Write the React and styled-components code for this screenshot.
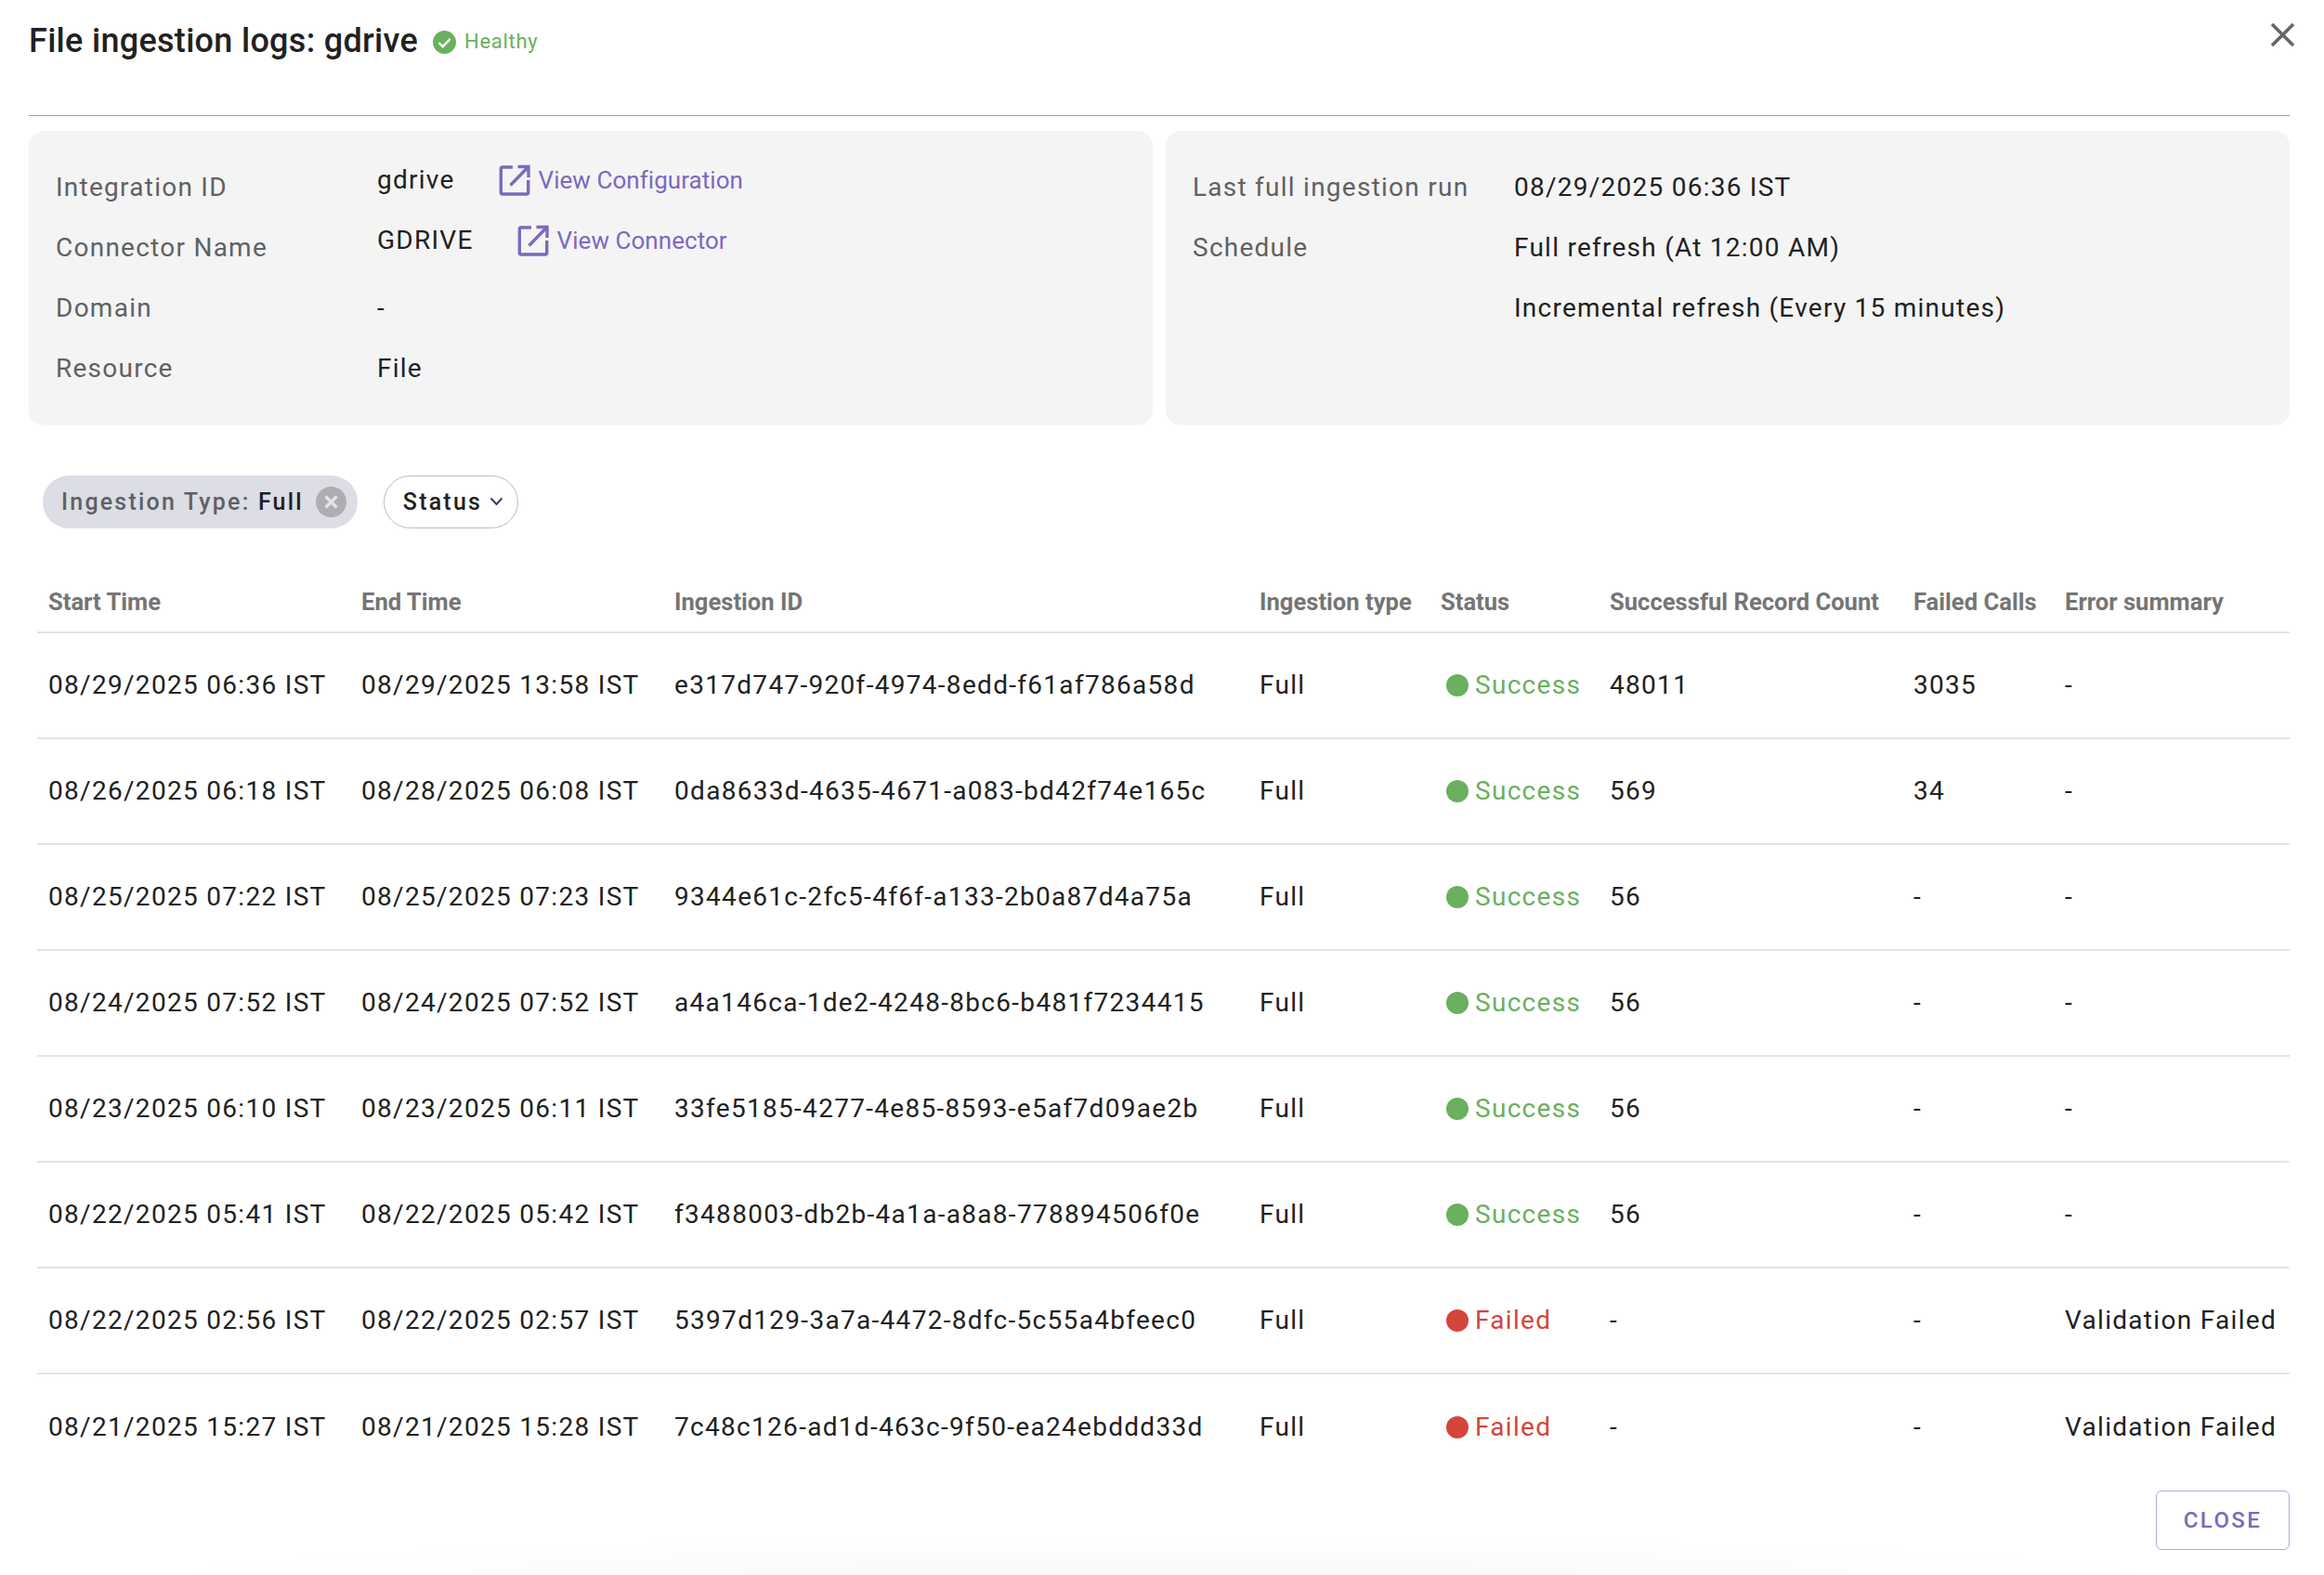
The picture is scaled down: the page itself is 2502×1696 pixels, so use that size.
import styled, { createGlobalStyle } from "styled-components";

const GlobalStyle = createGlobalStyle`
  html, body {
    margin: 0;
    padding: 0;
    background: #fff;
  }
  body {
    font-family: Roboto, "Liberation Sans", sans-serif;
    color: #212121;
  }
`;

const Dialog = styled.div`
  position: relative;
  width: 2502px;
  height: 1696px;
  box-sizing: border-box;
  padding: 0 37px 0 31px;
  overflow: hidden;

  &::after {
    content: "";
    position: absolute;
    left: 200px;
    right: 200px;
    bottom: 0;
    height: 40px;
    background: radial-gradient(ellipse 50% 100% at 50% 100%, #fafafa 30%, rgba(250, 250, 250, 0));
    pointer-events: none;
  }
`;

const Header = styled.header`
  position: relative;
  height: 124px;
  border-bottom: 1.5px solid #a0a0a0;
  display: flex;
  align-items: flex-start;
`;

const Title = styled.h2`
  margin: 21px 0 0;
  font-size: 36px;
  line-height: 46px;
  font-weight: 500;
  letter-spacing: 0.3px;
  color: #212121;
`;

const Health = styled.div`
  display: flex;
  align-items: center;
  margin: 32px 0 0 16px;
  gap: 9px;
  font-size: 22px;
  line-height: 26px;
  letter-spacing: 0.7px;
  color: #6ab05f;
`;

const CloseIcon = styled.button`
  position: absolute;
  top: 23px;
  right: -7px;
  width: 29px;
  height: 29px;
  padding: 0;
  border: 0;
  background: none;
  display: flex;
`;

const Panels = styled.section`
  display: grid;
  grid-template-columns: 1210px 1210px;
  gap: 14px;
  margin-top: 15.5px;
`;

const Panel = styled.div`
  height: 317px;
  box-sizing: border-box;
  padding: 28px 29px 0;
  background: #f4f4f4;
  border-radius: 16px;
  display: grid;
  grid-auto-rows: 65px;
  align-content: start;
`;

const InfoRow = styled.div`
  display: grid;
  grid-template-columns: 346px 1fr;
  align-items: center;
  font-size: 28px;
  letter-spacing: 1.25px;
`;

const InfoLabel = styled.span`
  color: #616161;
`;

const InfoValue = styled.span`
  color: #212121;
  display: flex;
  align-items: center;
  gap: 47px;
  padding-bottom: ${(props) => (props.$raised ? "15px" : "0")};
`;

const ConfigLink = styled.a`
  display: flex;
  align-items: center;
  gap: 9px;
  color: #7d68bf;
  font-size: 26px;
  letter-spacing: 0.05px;
`;

const Filters = styled.div`
  display: flex;
  gap: 28px;
  margin: 54px 0 0 15px;
`;

const Chip = styled.div`
  height: 57px;
  box-sizing: border-box;
  display: flex;
  align-items: center;
  border-radius: 29px;
  font-size: 25px;
  font-weight: 500;
  letter-spacing: 2.2px;
  background: ${(props) => (props.$active ? "#dcdde5" : "#fff")};
  border: ${(props) => (props.$active ? "none" : "1px solid #bdbdbd")};
  padding: ${(props) => (props.$active ? "0 12px 0 20px" : "0 15px 0 20px")};
  gap: ${(props) => (props.$active ? "13px" : "8px")};
`;

const ChipLabel = styled.span`
  color: #5f6065;
`;

const ChipValue = styled.span`
  color: #212121;
`;

const Table = styled.div`
  margin: 46px 0 0 9px;
`;

const Row = styled.div`
  display: grid;
  grid-template-columns: 337px 337px 630px 195px 182px 327px 163px 1fr;
  align-items: center;
  height: 114px;
  box-sizing: border-box;
  border-bottom: ${(props) => (props.$last ? "none" : "2px solid #e4e4e4")};
`;

const HeadRow = styled(Row)`
  height: 67px;
  align-items: start;
`;

const HeadCell = styled.div`
  padding: 18px 12px 0;
  font-size: 25.6px;
  line-height: 30px;
  font-weight: 700;
  color: #757575;
  white-space: nowrap;
`;

const Cell = styled.div`
  padding: 0 12px;
  font-size: 28px;
  letter-spacing: 1.3px;
  color: #212121;
  white-space: nowrap;
  display: flex;
  align-items: center;
`;

const Dot = styled.span`
  width: 24px;
  height: 24px;
  margin: 0 7px 0 6px;
  border-radius: 50%;
  background: ${(props) => props.color};
`;

const StatusText = styled.span`
  color: ${(props) => props.color};
`;

const Footer = styled.footer`
  display: flex;
  justify-content: flex-end;
  margin-top: 11.5px;
`;

const CloseButton = styled.button`
  width: 144px;
  height: 64px;
  padding: 0;
  background: #fff;
  border: 1.5px solid #b3a8dc;
  border-radius: 6px;
  color: #7d68bf;
  font-family: inherit;
  font-size: 24px;
  font-weight: 500;
  letter-spacing: 2.4px;
`;

const OpenIcon = () => (
  <svg width="34" height="34" viewBox="0 0 34 34" fill="none" stroke="#7d68bf" strokeWidth="3.4">
    <path d="M15 3H4a1.7 1.7 0 0 0-1.7 1.7v25.600A1.7 1.7 0 0 0 4 32h26a1.7 1.7 0 0 0 1.7-1.7V17" />
    <path d="M12.500 22.500 31 3.500M20.500 2.500H32v11.500" />
  </svg>
);

const CheckBadge = () => (
  <svg width="25" height="25" viewBox="0 0 25 25">
    <circle cx="12.500" cy="12.500" r="12.500" fill="#6ab05f" />
    <path d="M6.500 13l4.200 4.200 8-8.400" fill="none" stroke="#fff" strokeWidth="2.400" />
  </svg>
);

const ChipClear = () => (
  <svg width="33" height="33" viewBox="0 0 33 33">
    <circle cx="16.500" cy="16.500" r="16.500" fill="#adadb2" />
    <path d="M10.500 10.500l12 12M22.500 10.500l-12 12" stroke="#e4e4e8" strokeWidth="3.400" />
  </svg>
);

const Chevron = () => (
  <svg width="15" height="10" viewBox="0 0 15 10" fill="none" stroke="#3f3a78" strokeWidth="2">
    <path d="M1.500 1.500l6 6.500 6-6.500" />
  </svg>
);

const COLUMNS = [
  "Start Time",
  "End Time",
  "Ingestion ID",
  "Ingestion type",
  "Status",
  "Successful Record Count",
  "Failed Calls",
  "Error summary",
];

const LOGS = [
  ["08/29/2025 06:36 IST", "08/29/2025 13:58 IST", "e317d747-920f-4974-8edd-f61af786a58d", "Success", "48011", "3035", "-"],
  ["08/26/2025 06:18 IST", "08/28/2025 06:08 IST", "0da8633d-4635-4671-a083-bd42f74e165c", "Success", "569", "34", "-"],
  ["08/25/2025 07:22 IST", "08/25/2025 07:23 IST", "9344e61c-2fc5-4f6f-a133-2b0a87d4a75a", "Success", "56", "-", "-"],
  ["08/24/2025 07:52 IST", "08/24/2025 07:52 IST", "a4a146ca-1de2-4248-8bc6-b481f7234415", "Success", "56", "-", "-"],
  ["08/23/2025 06:10 IST", "08/23/2025 06:11 IST", "33fe5185-4277-4e85-8593-e5af7d09ae2b", "Success", "56", "-", "-"],
  ["08/22/2025 05:41 IST", "08/22/2025 05:42 IST", "f3488003-db2b-4a1a-a8a8-778894506f0e", "Success", "56", "-", "-"],
  ["08/22/2025 02:56 IST", "08/22/2025 02:57 IST", "5397d129-3a7a-4472-8dfc-5c55a4bfeec0", "Failed", "-", "-", "Validation Failed"],
  ["08/21/2025 15:27 IST", "08/21/2025 15:28 IST", "7c48c126-ad1d-463c-9f50-ea24ebddd33d", "Failed", "-", "-", "Validation Failed"],
];

const STATUS_COLORS = { Success: "#6ab05f", Failed: "#d4453c" };

const App = () => {
  return (
    <>
      <GlobalStyle />
      <Dialog>
        <Header>
          <Title>File ingestion logs: gdrive</Title>
          <Health>
            <CheckBadge />
            Healthy
          </Health>
          <CloseIcon aria-label="close">
            <svg width="29" height="29" viewBox="0 0 29 29" fill="none" stroke="#666" strokeWidth="3.6">
              <path d="M3 3l23 23M26 3L3 26" />
            </svg>
          </CloseIcon>
        </Header>

        <Panels>
          <Panel>
            <InfoRow>
              <InfoLabel>Integration ID</InfoLabel>
              <InfoValue $raised>
                gdrive
                <ConfigLink>
                  <OpenIcon />
                  View Configuration
                </ConfigLink>
              </InfoValue>
            </InfoRow>
            <InfoRow>
              <InfoLabel>Connector Name</InfoLabel>
              <InfoValue $raised>
                GDRIVE
                <ConfigLink>
                  <OpenIcon />
                  View Connector
                </ConfigLink>
              </InfoValue>
            </InfoRow>
            <InfoRow>
              <InfoLabel>Domain</InfoLabel>
              <InfoValue>-</InfoValue>
            </InfoRow>
            <InfoRow>
              <InfoLabel>Resource</InfoLabel>
              <InfoValue>File</InfoValue>
            </InfoRow>
          </Panel>
          <Panel>
            <InfoRow>
              <InfoLabel>Last full ingestion run</InfoLabel>
              <InfoValue>08/29/2025 06:36 IST</InfoValue>
            </InfoRow>
            <InfoRow>
              <InfoLabel>Schedule</InfoLabel>
              <InfoValue>Full refresh (At 12:00 AM)</InfoValue>
            </InfoRow>
            <InfoRow>
              <InfoLabel />
              <InfoValue>Incremental refresh (Every 15 minutes)</InfoValue>
            </InfoRow>
          </Panel>
        </Panels>

        <Filters>
          <Chip $active>
            <span>
              <ChipLabel>Ingestion Type: </ChipLabel>
              <ChipValue>Full</ChipValue>
            </span>
            <ChipClear />
          </Chip>
          <Chip>
            <ChipValue>Status</ChipValue>
            <Chevron />
          </Chip>
        </Filters>

        <Table>
          <HeadRow>
            {COLUMNS.map((col) => (
              <HeadCell key={col}>{col}</HeadCell>
            ))}
          </HeadRow>
          {LOGS.map((log, i) => (
            <Row key={log[2]} $last={i === LOGS.length - 1}>
              <Cell>{log[0]}</Cell>
              <Cell>{log[1]}</Cell>
              <Cell>{log[2]}</Cell>
              <Cell>Full</Cell>
              <Cell>
                <Dot color={STATUS_COLORS[log[3]]} />
                <StatusText color={STATUS_COLORS[log[3]]}>{log[3]}</StatusText>
              </Cell>
              <Cell>{log[4]}</Cell>
              <Cell>{log[5]}</Cell>
              <Cell>{log[6]}</Cell>
            </Row>
          ))}
        </Table>

        <Footer>
          <CloseButton>CLOSE</CloseButton>
        </Footer>
      </Dialog>
    </>
  );
};

export default App;
